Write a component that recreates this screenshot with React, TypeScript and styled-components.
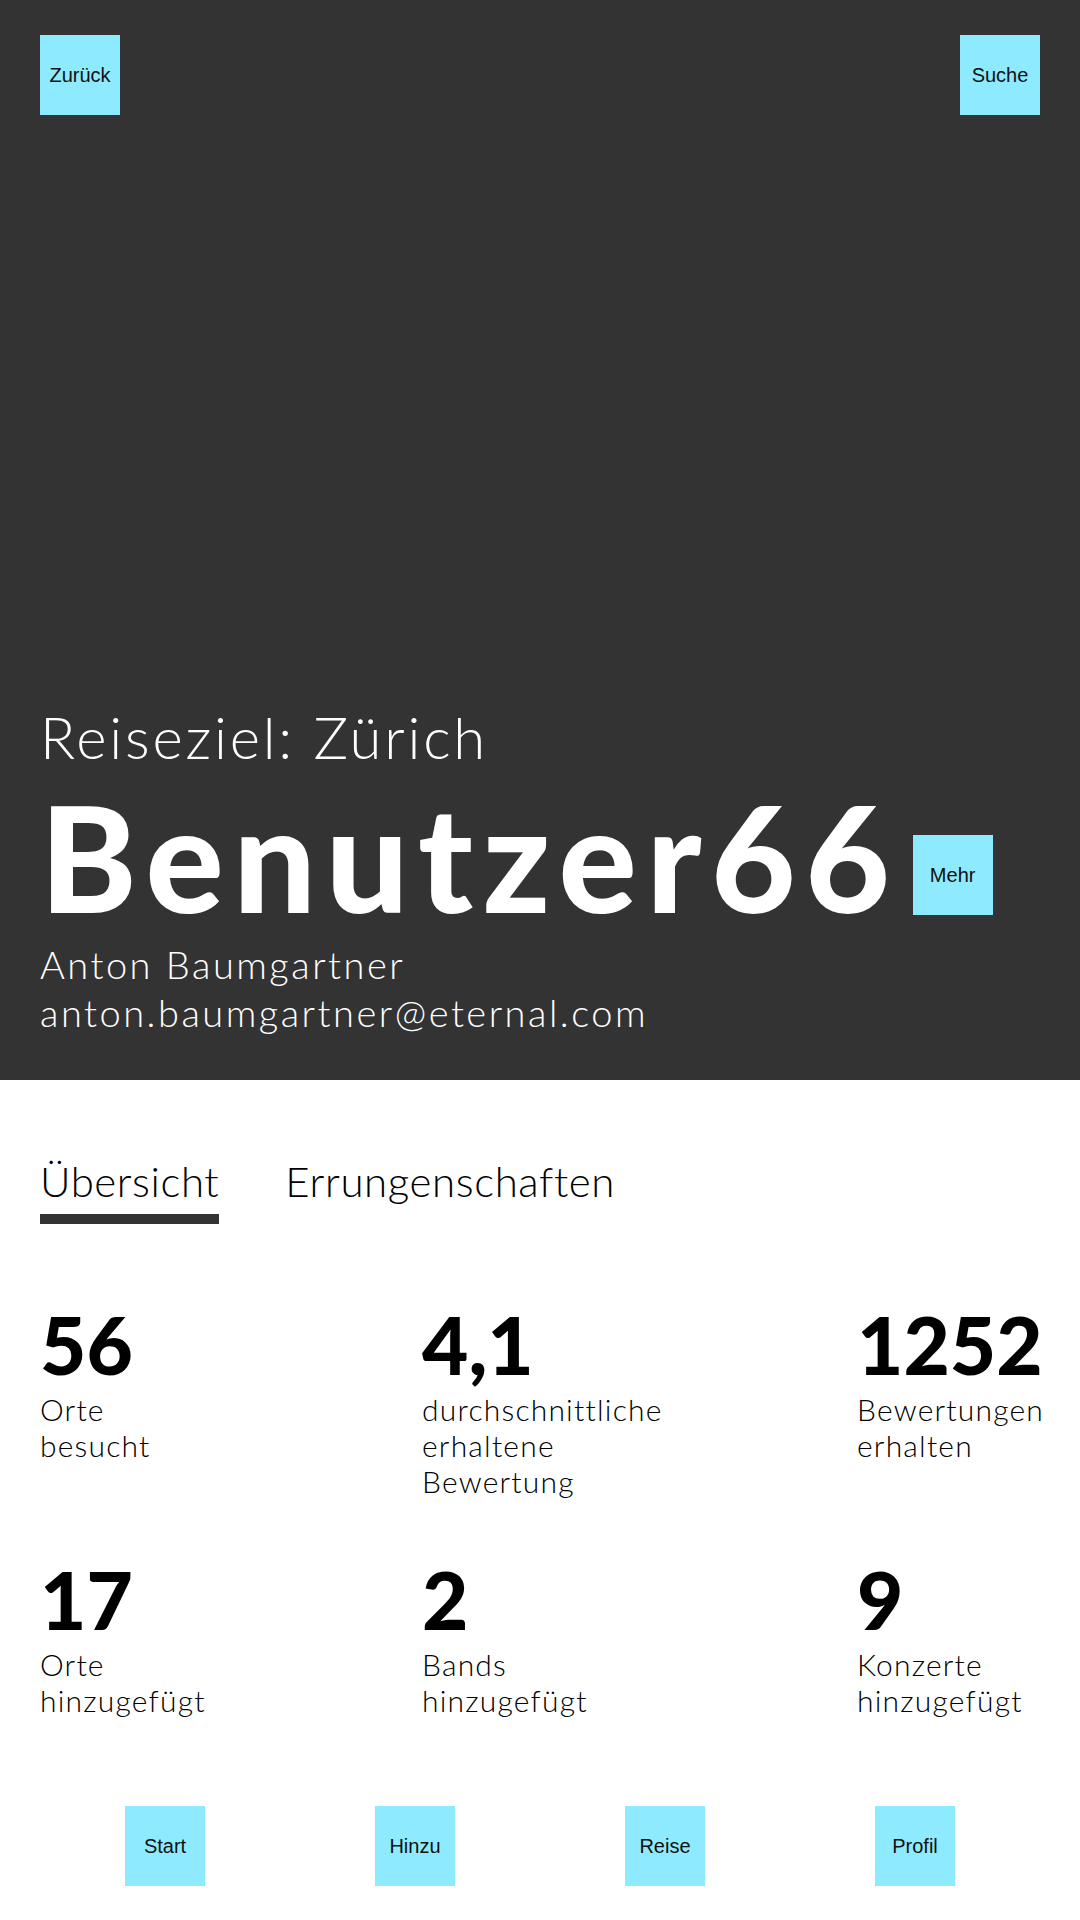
import React from "react";
import styled, { createGlobalStyle } from "styled-components";

const GlobalStyle = createGlobalStyle`
  html, body {
    margin: 0;
    padding: 0;
    background: #ffffff;
  }
  body {
    font-family: "Lato", "Liberation Sans", sans-serif;
    color: #000;
  }
  * { box-sizing: border-box; }
`;

const Page = styled.div`
  width: 1080px;
  min-height: 1920px;
  display: flex;
  flex-direction: column;
  background: #fff;
`;

const Header = styled.header`
  height: 1080px;
  background: #333333;
  display: flex;
  flex-direction: column;
  justify-content: space-between;
  padding: 35px 40px 44px;
`;

const TopBar = styled.div`
  display: flex;
  justify-content: space-between;
  align-items: flex-start;
`;

const SquareButton = styled.button`
  width: 80px;
  height: 80px;
  flex: none;
  border: none;
  padding: 0;
  margin: 0;
  background: #8eebff;
  color: #111;
  font-family: "Liberation Sans", Arial, sans-serif;
  font-size: 20px;
  line-height: 1;
  display: flex;
  align-items: center;
  justify-content: center;
  cursor: pointer;
`;

const Identity = styled.div`
  display: flex;
  flex-direction: column;
  color: #fff;
`;

const Destination = styled.div`
  font-size: 58px;
  font-weight: 300;
  line-height: 70px;
  letter-spacing: 2.8px;
`;

const TitleRow = styled.div`
  display: flex;
  align-items: flex-end;
  gap: 13px;
  margin-top: 26px;
`;

const Username = styled.h1`
  margin: 0;
  font-size: 146px;
  font-weight: 900;
  line-height: 117px;
  letter-spacing: 9.6px;
`;

const Contact = styled.div`
  margin-top: 25px;
  font-size: 38px;
  font-weight: 300;
  line-height: 48px;
  letter-spacing: 2.5px;
`;

const Main = styled.main`
  padding: 76px 40px 0;
  display: flex;
  flex-direction: column;
`;

const Tabs = styled.nav`
  display: flex;
  gap: 66px;
`;

const Tab = styled.div<{ $active?: boolean }>`
  display: flex;
  flex-direction: column;
  font-size: 42px;
  font-weight: 300;
  line-height: 50px;
  letter-spacing: 0.6px;
  color: #000;

  &::after {
    content: "";
    display: block;
    height: 10px;
    margin-top: 8px;
    background: ${(p) => (p.$active ? "#333333" : "transparent")};
  }
`;

const StatsGrid = styled.section`
  margin-top: 80px;
  display: grid;
  grid-template-columns: 382px 435px 1fr;
  row-gap: 60px;
`;

const Stat = styled.div`
  display: flex;
  flex-direction: column;
`;

const StatValue = styled.div`
  font-size: 80px;
  font-weight: 900;
  line-height: 80px;
`;

const StatLabel = styled.div`
  margin-top: 7px;
  width: min-content;
  font-size: 30px;
  font-weight: 300;
  line-height: 36px;
  letter-spacing: 1.2px;
  color: #000;
`;

const BottomNav = styled.nav`
  display: grid;
  grid-template-columns: repeat(4, 1fr);
  padding: 88px 40px 34px;
  justify-items: center;
`;

const stats = [
  { value: "56", label: "Orte besucht" },
  { value: "4,1", label: "durchschnittliche erhaltene Bewertung" },
  { value: "1252", label: "Bewertungen erhalten" },
  { value: "17", label: "Orte hinzugefügt" },
  { value: "2", label: "Bands hinzugefügt" },
  { value: "9", label: "Konzerte hinzugefügt" },
];

const navItems = ["Start", "Hinzu", "Reise", "Profil"];

export default function App() {
  return (
    <>
      <GlobalStyle />
      <Page>
        <Header>
          <TopBar>
            <SquareButton>Zurück</SquareButton>
            <SquareButton>Suche</SquareButton>
          </TopBar>
          <Identity>
            <Destination>Reiseziel: Zürich</Destination>
            <TitleRow>
              <Username>Benutzer66</Username>
              <SquareButton>Mehr</SquareButton>
            </TitleRow>
            <Contact>
              Anton Baumgartner
              <br />
              anton.baumgartner@eternal.com
            </Contact>
          </Identity>
        </Header>
        <Main>
          <Tabs>
            <Tab $active>Übersicht</Tab>
            <Tab>Errungenschaften</Tab>
          </Tabs>
          <StatsGrid>
            {stats.map((s) => (
              <Stat key={s.value + s.label}>
                <StatValue>{s.value}</StatValue>
                <StatLabel>{s.label}</StatLabel>
              </Stat>
            ))}
          </StatsGrid>
        </Main>
        <BottomNav>
          {navItems.map((n) => (
            <SquareButton key={n}>{n}</SquareButton>
          ))}
        </BottomNav>
      </Page>
    </>
  );
}
